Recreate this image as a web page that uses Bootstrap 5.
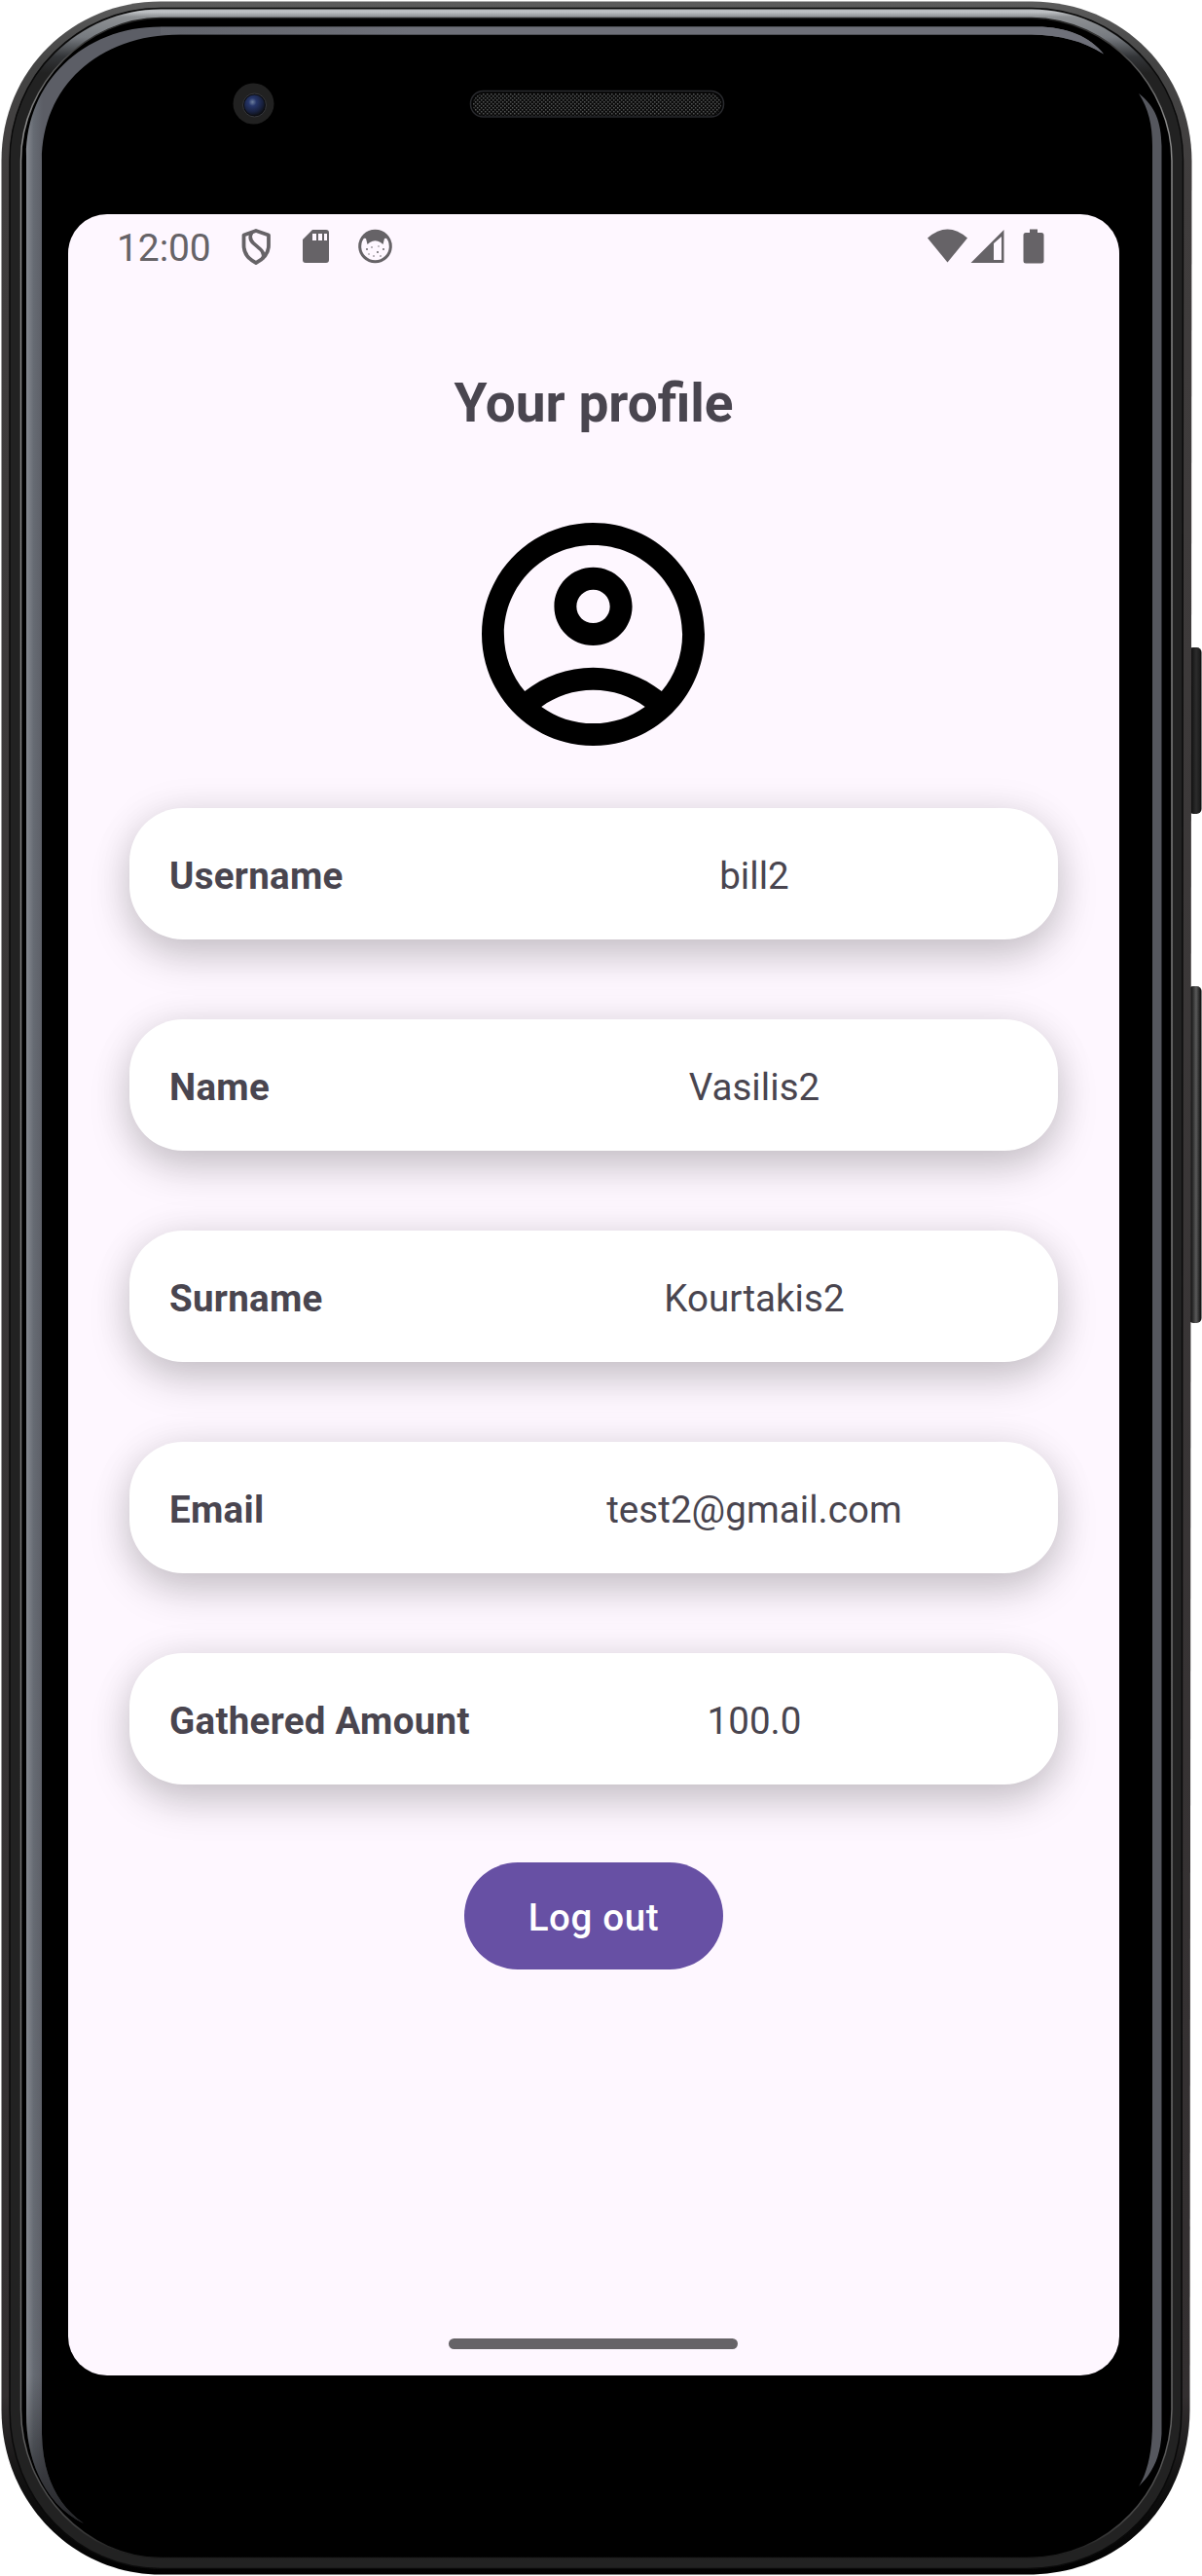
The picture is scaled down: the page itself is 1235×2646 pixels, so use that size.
<!DOCTYPE html>
<html lang="en">
<head>
<meta charset="utf-8">
<meta name="viewport" content="width=device-width, initial-scale=1">
<title>Your profile</title>
<link href="https://cdn.jsdelivr.net/npm/bootstrap@5.3.0/dist/css/bootstrap.min.css" rel="stylesheet">
<style>
  body { background: #fff; font-family: Roboto, "Liberation Sans", sans-serif; color: #49454f; }
  .phone { width: 1235px; height: 2646px; padding: 220px 85px 206px 70px; }
  .phone-frame { inset: 0; z-index: 0; }
  .app-screen { z-index: 1; background: #fef7ff; border-radius: 40px; }
  .status-bar { height: 66px; padding: 0 77px 0 50px; color: #666367; }
  .status-bar svg { display: block; fill: currentColor; }
  .clock { font-size: 39px; line-height: 66px; width: 99px; letter-spacing: -.1px; padding-top: 3px; }
  .status-icons { margin-left: 16px; }
  .page-title { font-size: 55px; line-height: 64px; font-weight: 700; margin: 96px 0 0; }
  .avatar { margin: 91px 1px 0 0; }
  .fields { margin: 64px 63px 0; gap: 82px; }
  .field-card { height: 135px; border-radius: 55px; padding: 4px 41px 0; font-size: 38.5px; letter-spacing: .06px;
    box-shadow: 0 18px 42px rgba(0,0,0,.18), 0 2px 40px rgba(0,0,0,.09); }
  .field-label { width: 330px; font-weight: 700; letter-spacing: .28px; }
  .logout { margin-top: 80px; width: 266px; height: 110px; font-size: 38.5px; font-weight: 500; letter-spacing: .65px;
    padding: 3px 0 0; color: #fff; --bs-btn-bg: #6750a4; --bs-btn-border-color: #6750a4; border: 0; }
  .home-pill { width: 297px; height: 11px; margin: 0 1px 27px 0; background: #666367; }
</style>
</head>
<body>
<div class="phone position-relative d-flex">
  <svg class="phone-frame position-absolute" width="1235" height="2646" viewBox="0 0 1235 2646" aria-hidden="true">
    <defs>
      <linearGradient id="rim" x1="0" y1="0" x2="0" y2="2646" gradientUnits="userSpaceOnUse">
        <stop offset="0" stop-color="#5c5c5c"/><stop offset=".025" stop-color="#444"/><stop offset=".07" stop-color="#403d3d"/><stop offset=".93" stop-color="#332f30"/><stop offset=".965" stop-color="#101010"/><stop offset="1" stop-color="#000"/>
      </linearGradient>
      <linearGradient id="silver" x1="0" y1="8" x2="0" y2="75" gradientUnits="userSpaceOnUse">
        <stop offset="0" stop-color="#a9adb0"/><stop offset=".06" stop-color="#c0c3c6"/><stop offset=".14" stop-color="#8d9093"/><stop offset=".45" stop-color="#777b80"/><stop offset=".75" stop-color="#333538"/><stop offset="1" stop-color="#222"/>
      </linearGradient>
      <linearGradient id="hair" x1="0" y1="18" x2="0" y2="2628" gradientUnits="userSpaceOnUse">
        <stop offset="0" stop-color="#222"/><stop offset=".04" stop-color="#8a8a8a"/><stop offset=".94" stop-color="#666"/><stop offset=".985" stop-color="#444"/><stop offset="1" stop-color="#1c1c1c"/>
      </linearGradient>
      <linearGradient id="glow" x1="27" y1="0" x2="44" y2="0" gradientUnits="userSpaceOnUse">
        <stop offset="0" stop-color="#858990"/><stop offset=".45" stop-color="#666b73"/><stop offset="1" stop-color="#5c5e66"/>
      </linearGradient>
      <linearGradient id="topglow" x1="60" y1="0" x2="420" y2="0" gradientUnits="userSpaceOnUse">
        <stop offset="0" stop-color="#6e7178" stop-opacity="0"/><stop offset="1" stop-color="#6e7079"/>
      </linearGradient>
      <linearGradient id="fade" x1="0" y1="2440" x2="0" y2="2592" gradientUnits="userSpaceOnUse">
        <stop offset="0" stop-color="#000" stop-opacity="0"/><stop offset="1" stop-color="#000" stop-opacity=".6"/>
      </linearGradient>
      <linearGradient id="key" x1="1223" y1="0" x2="1235" y2="0" gradientUnits="userSpaceOnUse">
        <stop offset="0" stop-color="#0c0c0c"/><stop offset=".5" stop-color="#2c2c2c"/><stop offset=".8" stop-color="#1d1d1d"/><stop offset="1" stop-color="#000"/>
      </linearGradient>
      <linearGradient id="key2" x1="1223" y1="0" x2="1235" y2="0" gradientUnits="userSpaceOnUse">
        <stop offset="0" stop-color="#0c0c0c"/><stop offset=".5" stop-color="#5a5a5a"/><stop offset=".8" stop-color="#222"/><stop offset="1" stop-color="#000"/>
      </linearGradient>
      <radialGradient id="lens" cx=".4" cy=".35" r=".65">
        <stop offset="0" stop-color="#6d7f9e"/><stop offset=".3" stop-color="#26366a"/><stop offset=".75" stop-color="#18213f"/><stop offset="1" stop-color="#10131c"/>
      </radialGradient>
      <pattern id="mesh" width="4" height="4" patternUnits="userSpaceOnUse">
        <rect width="4" height="4" fill="#0c0c0c"/><rect width="1.500" height="1.500" fill="#525454"/><rect x="2" y="2" width="1.500" height="1.500" fill="#525454"/>
      </pattern>
    </defs>
    <rect x="1221" y="665" width="13.500" height="171" rx="5" fill="url(#key)"/>
    <rect x="1221" y="1013" width="13.500" height="346" rx="5" fill="url(#key2)"/>
    <path fill="url(#rim)" d="M165 1.500H1060C1155 2 1224 75 1224.500 165L1222.500 2475C1222 2570 1155 2644.500 1055 2644.500H165C75 2644.500 1.500 2570 1.500 2475V165C1.500 72 75 1.500 165 1.500Z"/>
    <path fill="#222" stroke="#0a0a0a" stroke-width="1.500" d="M165 8.500H1060C1148 9 1215.500 80 1215.500 165L1214 2475C1214 2568 1148 2638.500 1055 2638.500H165C80 2638.500 10 2568 10 2475V165C10 78 80 8.500 165 8.500Z"/>
    <path fill="url(#silver)" d="M165 9.500H1060C1147 10 1214.500 81 1214.500 165H11C11 79 81 9.500 165 9.500Z"/>
    <path fill="#000" stroke="url(#hair)" stroke-width="1.500" d="M165 18.500H1060C1140 19 1204 90 1204 165V2475C1203 2560 1140 2627.500 1055 2627.500H165C90 2627.500 21.500 2560 21.500 2475V165C21.500 85 90 18.500 165 18.500Z"/>
    <path fill="url(#glow)" d="M86 2592C48 2574 27 2530 27 2480V160C27 85 85 27.500 165 27.500H1065C1097 27.500 1120 38 1134 55.500C1112 42 1090 36 1060 35.500H185C100 35.500 43 90 43 165V2500C44 2543 58 2572 86 2592Z"/>
    <path fill="url(#topglow)" d="M60 27.500H1065C1097 27.500 1120 38 1134 55.500C1112 42 1090 36 1060 35.500H165V27.500Z"/>
    <path fill="url(#fade)" d="M86 2592C48 2574 27 2530 27 2480V2440H43V2500C44 2543 58 2572 86 2592Z"/>
    <path fill="#55575e" d="M1170 96C1187 109 1193 125 1193.500 150V2500C1192 2525 1184 2540 1170 2554C1180 2538 1184 2515 1184 2490V150C1184 128 1180 112 1170 96Z"/>
    <circle cx="260.500" cy="106.500" r="21" fill="#212121"/>
    <circle cx="261.500" cy="108" r="12" fill="#0b0c10" stroke="#38393d" stroke-width="1"/>
    <circle cx="261.500" cy="108" r="10.500" fill="url(#lens)"/>
    <rect x="483.500" y="93.500" width="260" height="26.500" rx="13" fill="#050505" stroke="#292a2e" stroke-width="1.500"/>
    <rect x="486" y="96" width="255" height="22.500" rx="11" fill="url(#mesh)"/>
  </svg>

  <main class="app-screen position-relative d-flex flex-column align-items-center flex-grow-1">
    <div class="status-bar w-100 d-flex align-items-center justify-content-between">
      <div class="d-flex align-items-center">
        <span class="clock">12:00</span>
        <svg class="status-icons" width="180" height="56" viewBox="0 0 180 56">
          <path d="M28 12L41 16.500V27C41 36 36 41 28 45C20 41 15.500 36 15.500 27V16.500Z" fill="none" stroke="currentColor" stroke-width="3.800" stroke-linejoin="round"/>
          <path d="M24 13.500C21 18 22 22 26 25.500L32 30.500C36 34 37 37 34.500 41" fill="none" stroke="currentColor" stroke-width="3.600"/>
          <path fill-rule="evenodd" d="M86 11H100Q103 11 103 14V42Q103 45 100 45H79Q76 45 76 42V21ZM86 15V22H90V15ZM92 15V22H96V15ZM98 15V22H101V15Z"/>
          <circle cx="150.500" cy="28" r="15.800" fill="none" stroke="currentColor" stroke-width="3"/>
          <path d="M136 21Q140 11.500 150.500 11.500T165 21Q162 19 160 20L158.500 26L156 24Q150.500 20.500 145 24L142.500 26L141 20Q139 19 136 21Z"/>
          <g><circle cx="142" cy="31" r="1"/><circle cx="147" cy="29" r=".8"/><circle cx="153" cy="34" r="1"/><circle cx="159" cy="31" r="1"/><circle cx="149" cy="38" r=".8"/><circle cx="156" cy="38" r=".8"/><circle cx="144" cy="36" r=".7"/><circle cx="154" cy="28" r=".7"/></g>
        </svg>
      </div>
      <svg width="120" height="36" viewBox="0 0 120 36">
        <path d="M0 9.500Q20.500-8.500 41 9.500L20.500 34.500Z"/>
        <path fill-rule="evenodd" d="M44.500 35L78.500 1V35ZM68 15V32H76V8Z"/>
        <path d="M105 .500H113V4H117Q119.500 4 119.500 6.500V33Q119.500 35.500 117 35.500H101Q98.500 35.500 98.500 33V6.500Q98.500 4 101 4H105Z"/>
      </svg>
    </div>

    <h1 class="page-title">Your profile</h1>

    <svg class="avatar" width="229" height="229" viewBox="2 2 20 20" fill="#000">
      <path d="M12 2C6.480 2 2 6.480 2 12s4.480 10 10 10 10-4.480 10-10S17.520 2 12 2zM7.350 18.500C8.660 17.560 10.260 17 12 17s3.340.56 4.650 1.500C15.340 19.440 13.740 20 12 20s-3.340-.56-4.650-1.500zm10.790-1.380C16.450 15.800 14.320 15 12 15s-4.450.8-6.140 2.120C4.700 15.730 4 13.950 4 12c0-4.420 3.580-8 8-8s8 3.580 8 8c0 1.950-.7 3.730-1.860 5.120z"/>
      <path d="M12 6c-1.930 0-3.500 1.570-3.500 3.500S10.070 13 12 13s3.500-1.570 3.500-3.500S13.930 6 12 6zm0 5c-.83 0-1.500-.67-1.500-1.500S11.170 8 12 8s1.500.67 1.500 1.500S12.830 11 12 11z"/>
    </svg>

    <div class="fields align-self-stretch d-flex flex-column">
      <div class="field-card bg-white d-flex align-items-center"><span class="field-label">Username</span><span class="flex-fill text-center">bill2</span></div>
      <div class="field-card bg-white d-flex align-items-center"><span class="field-label">Name</span><span class="flex-fill text-center">Vasilis2</span></div>
      <div class="field-card bg-white d-flex align-items-center"><span class="field-label">Surname</span><span class="flex-fill text-center">Kourtakis2</span></div>
      <div class="field-card bg-white d-flex align-items-center"><span class="field-label">Email</span><span class="flex-fill text-center">test2@gmail.com</span></div>
      <div class="field-card bg-white d-flex align-items-center"><span class="field-label">Gathered Amount</span><span class="flex-fill text-center">100.0</span></div>
    </div>

    <button class="logout btn btn-primary rounded-pill" type="button">Log out</button>
    <div class="home-pill rounded-pill mt-auto"></div>
  </main>
</div>
<script src="https://cdn.jsdelivr.net/npm/bootstrap@5.3.0/dist/js/bootstrap.bundle.min.js"></script>
</body>
</html>
